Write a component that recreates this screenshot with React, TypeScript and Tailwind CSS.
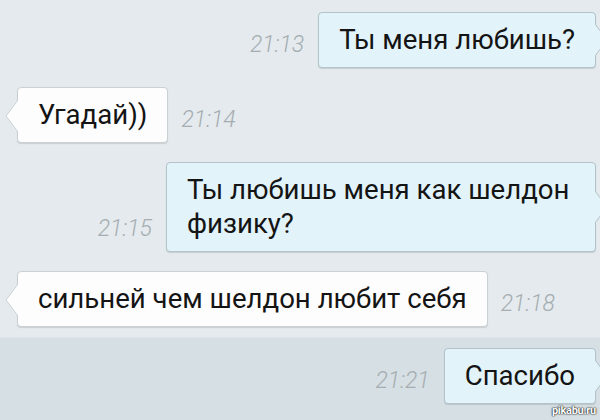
import type { ReactNode } from 'react'

interface Msg {
  text: ReactNode
  time: string
  mine: boolean
  width?: string
}

const TOP: Msg[] = [
  { text: 'Ты меня любишь?', time: '21:13', mine: true },
  { text: 'Угадай))', time: '21:14', mine: false },
  { text: 'Ты любишь меня как шелдон физику?', time: '21:15', mine: true, width: 'w-[430px]' },
  { text: 'сильней чем шелдон любит себя', time: '21:18', mine: false },
]

function Time({ value }: { value: string }) {
  return (
    <span className="mb-[12px] text-[23px] leading-[22px] italic font-light text-[#a5adb1] shrink-0">
      {value}
    </span>
  )
}

function Bubble({ msg }: { msg: Msg }) {
  const tone = msg.mine
    ? 'bg-[#e2f3fa] border-[#b3c3cb]'
    : 'bg-[#fdfdfd] border-[#c9d1d5]'
  return (
    <div
      className={`relative rounded-[4px] border px-[20px] py-[10px] text-[27.6px] leading-[34px] text-[#141414] shadow-[0_1px_1px_rgba(0,0,0,0.12)] ${tone} ${msg.width ?? ''}`}
    >
      {msg.text}
      {msg.mine ? (
        <svg className="absolute right-[-13px] top-1/2 -translate-y-1/2" width="13" height="34" viewBox="0 0 13 34">
          <polygon points="0,1 12,17 0,33" fill="#e2f3fa" />
          <polyline points="0,1 12,17 0,33" fill="none" stroke="#b3c3cb" strokeWidth="1" />
        </svg>
      ) : (
        <svg className="absolute left-[-13px] top-[11px]" width="13" height="34" viewBox="0 0 13 34">
          <polygon points="13,1 1,17 13,33" fill="#fdfdfd" />
          <polyline points="13,1 1,17 13,33" fill="none" stroke="#c9d1d5" strokeWidth="1" />
        </svg>
      )}
    </div>
  )
}

function Row({ msg }: { msg: Msg }) {
  if (msg.mine) {
    return (
      <div className="flex items-end justify-end gap-[14px] pr-[4px]">
        <Time value={msg.time} />
        <Bubble msg={msg} />
      </div>
    )
  }
  return (
    <div className="flex items-end justify-start gap-[13px] pl-[17px]">
      <Bubble msg={msg} />
      <Time value={msg.time} />
    </div>
  )
}

export default function App() {
  return (
    <div
      className="relative w-[600px] h-[420px] overflow-hidden flex flex-col bg-[#e4eaed]"
      style={{ fontFamily: 'Roboto, "Noto Sans", sans-serif' }}
    >
      <div className="flex flex-col gap-[19px] pt-[12px] pb-[10px]">
        {TOP.map((m) => (
          <Row key={m.time} msg={m} />
        ))}
      </div>

      {/* Last message, highlighted row */}
      <div className="flex-1 flex flex-col pt-[10px] bg-[#d6dfe3] border-t border-[#dfe6e9]">
        <Row msg={{ text: 'Спасибо', time: '21:21', mine: true }} />
      </div>

      <span className="absolute right-[4px] bottom-[4px] text-[11px] leading-[11px] font-bold text-white tracking-tight [text-shadow:0_0_2px_#000,0_0_1px_#000]">
        pikabu.ru
      </span>
    </div>
  )
}
